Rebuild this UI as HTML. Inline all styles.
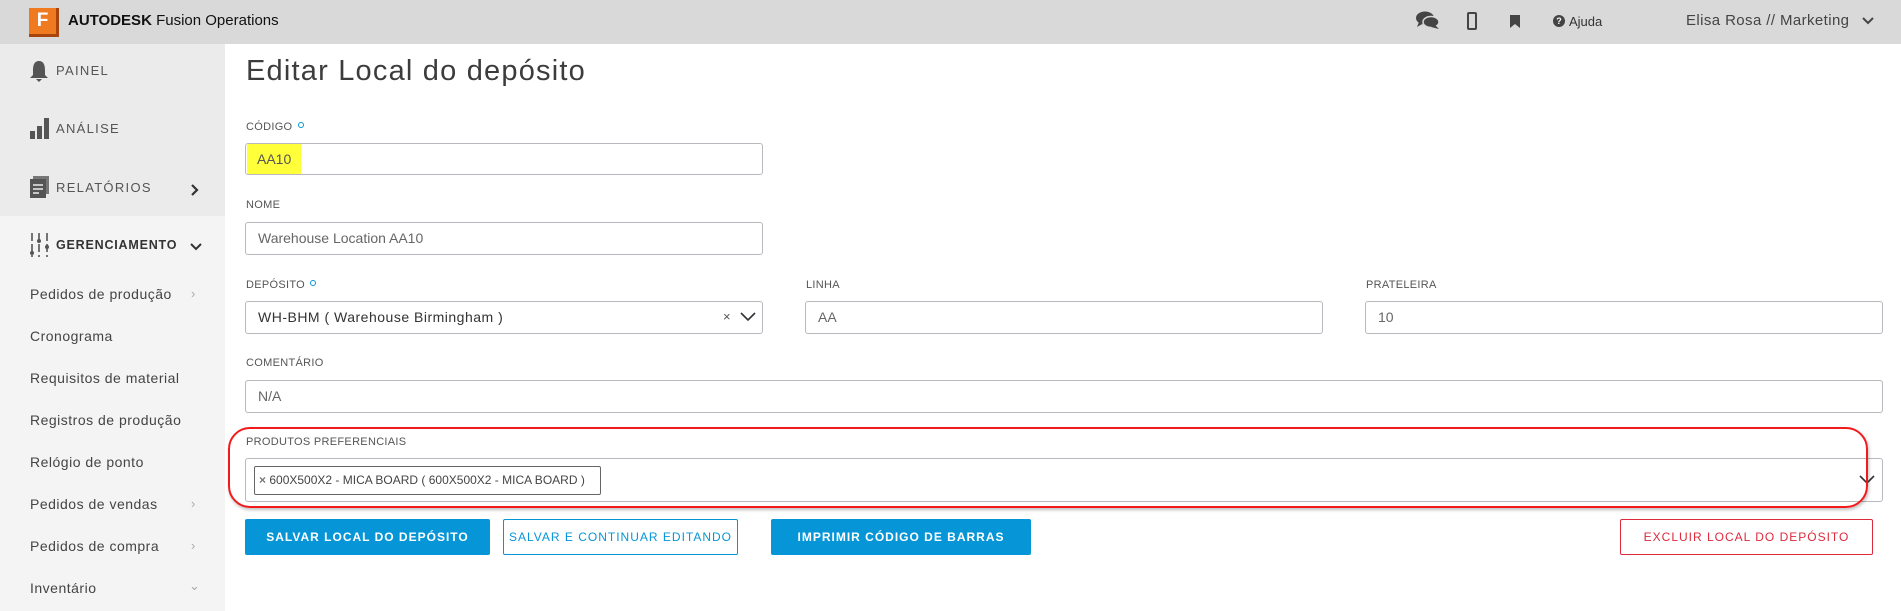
<!DOCTYPE html>
<html><head><meta charset="utf-8"><style>
*{box-sizing:border-box;margin:0;padding:0}
body{width:1901px;height:611px;overflow:hidden;background:#fff;font-family:"Liberation Sans",sans-serif;color:#3c3c3c;position:relative}
.abs{position:absolute}
.top{left:0;top:0;width:1901px;height:44px;background:#d9d9d9}
.side{left:0;top:44px;width:225px;height:567px;background:#f4f4f4}
.side1{left:0;top:44px;width:225px;height:172px;background:#ebebeb}
.nav{font-size:13px;letter-spacing:1.3px;color:#555}
.sub{left:30px;font-size:14px;letter-spacing:.5px;color:#444}
.lbl{font-size:11px;color:#555;letter-spacing:.3px}
.inp{border:1px solid #b8b8be;border-radius:3px;height:33px;font-size:14px;color:#666;padding-left:12px;line-height:31px}
.btn{height:36px;font-size:12px;font-weight:bold;letter-spacing:1px;text-align:center;line-height:36px;border-radius:2px}
</style></head><body>
<div class="abs top"></div>
<div class="abs" style="left:29px;top:8px;width:30px;height:29px;background:#a8440c"></div>
<div class="abs" style="left:29px;top:8px;width:27px;height:26px;background:#f07a1f;color:#fff;font-weight:bold;font-size:19px;text-align:center;line-height:26px">F</div>
<div class="abs" style="left:68px;top:12px;font-size:15px;color:#111"><b>AUTODESK</b> Fusion Operations</div>
<svg class="abs" style="left:1416px;top:11px" width="24" height="20" viewBox="0 0 24 20"><ellipse cx="9" cy="7" rx="9" ry="6.5" fill="#444"/><path d="M3 11 L1 16 L8 12Z" fill="#444"/><ellipse cx="15" cy="11" rx="8" ry="5.5" fill="#444" stroke="#d9d9d9" stroke-width="1.5"/><path d="M19 14 L23 18 L15 16Z" fill="#444"/></svg>
<div class="abs" style="left:1467px;top:12px;width:10px;height:18px;border:2px solid #444;border-radius:2px"></div>
<svg class="abs" style="left:1510px;top:15px" width="10" height="13"><path d="M0 0H10V13L5 9L0 13Z" fill="#444"/></svg>
<div class="abs" style="left:1553px;top:15px;width:12px;height:12px;border-radius:50%;background:#444;color:#fff;font-size:9px;font-weight:bold;text-align:center;line-height:12px">?</div>
<div class="abs" style="left:1569px;top:14px;font-size:13px;color:#333">Ajuda</div>
<div class="abs" style="left:1686px;top:12px;font-size:15px;color:#444;letter-spacing:.4px">Elisa Rosa // Marketing</div>
<svg class="abs" style="left:1861px;top:16px" width="14" height="10"><path d="M2 2L7 7L12 2" stroke="#444" stroke-width="2" fill="none"/></svg>

<div class="abs side"></div><div class="abs side1"></div>
<svg class="abs" style="left:29px;top:60px" width="20" height="22"><path d="M10 1C5 1 4 6 4 10V15L1 18H19L16 15V10C16 6 15 1 10 1Z M7 19H13L10 22Z" fill="#555"/></svg>
<div class="abs nav" style="left:56px;top:63px">PAINEL</div>
<svg class="abs" style="left:30px;top:118px" width="20" height="22"><rect x="0" y="13" width="5" height="8" fill="#555"/><rect x="7" y="8" width="5" height="13" fill="#555"/><rect x="14" y="0" width="5" height="21" fill="#555"/></svg>
<div class="abs nav" style="left:56px;top:121px">ANÁLISE</div>
<svg class="abs" style="left:30px;top:176px" width="20" height="22"><rect x="3" y="0" width="16" height="18" fill="#777"/><rect x="0" y="3" width="16" height="19" fill="#555"/><path d="M3 9H13M3 13H13M3 17H9" stroke="#ebebeb" stroke-width="1.5"/></svg>
<div class="abs nav" style="left:56px;top:180px">RELATÓRIOS</div>
<svg class="abs" style="left:190px;top:183px" width="10" height="14"><path d="M2 2L7 7L2 12" stroke="#333" stroke-width="2.2" fill="none"/></svg>
<svg class="abs" style="left:30px;top:233px" width="20" height="24"><path d="M2 0V24M9 0V24M17 0V24" stroke="#555" stroke-width="1.6" stroke-dasharray="8 3"/><circle cx="2" cy="20" r="2" fill="#555"/><circle cx="9" cy="8" r="2" fill="#555"/><circle cx="17" cy="14" r="2" fill="#555"/></svg>
<div class="abs nav" style="left:56px;top:238px;font-weight:bold;color:#333;letter-spacing:.8px;font-size:12.5px">GERENCIAMENTO</div>
<svg class="abs" style="left:190px;top:242px" width="12" height="10"><path d="M1 2L6 7L11 2" stroke="#333" stroke-width="2" fill="none"/></svg>
<div class="abs sub" style="top:286px">Pedidos de produção</div><div class="abs" style="left:191px;top:286px;color:#aaa;font-size:13px">›</div>
<div class="abs sub" style="top:328px">Cronograma</div>
<div class="abs sub" style="top:370px">Requisitos de material</div>
<div class="abs sub" style="top:412px">Registros de produção</div>
<div class="abs sub" style="top:454px">Relógio de ponto</div>
<div class="abs sub" style="top:496px">Pedidos de vendas</div><div class="abs" style="left:191px;top:496px;color:#aaa;font-size:13px">›</div>
<div class="abs sub" style="top:538px">Pedidos de compra</div><div class="abs" style="left:191px;top:538px;color:#aaa;font-size:13px">›</div>
<div class="abs sub" style="top:580px">Inventário</div><div class="abs" style="left:189px;top:578px;color:#aaa;font-size:13px">⌄</div>

<div class="abs" style="left:246px;top:55px;font-size:29px;color:#3c3c3c;letter-spacing:1.2px">Editar Local do depósito</div>

<div class="abs lbl" style="left:246px;top:121px">CÓDIGO <span style="display:inline-block;width:6px;height:6px;border:1.5px solid #0696d7;border-radius:50%;vertical-align:2px;margin-left:2px"></span></div>
<div class="abs inp" style="left:245px;top:143px;width:518px;height:32px;padding-left:0"><span style="display:inline-block;background:#ffff3a;color:#555;padding:0 10px;margin-left:1px;line-height:30px">AA10</span></div>
<div class="abs lbl" style="left:246px;top:199px">NOME</div>
<div class="abs inp" style="left:245px;top:222px;width:518px">Warehouse Location AA10</div>
<div class="abs lbl" style="left:246px;top:279px">DEPÓSITO <span style="display:inline-block;width:6px;height:6px;border:1.5px solid #0696d7;border-radius:50%;vertical-align:2px;margin-left:2px"></span></div>
<div class="abs inp" style="left:245px;top:301px;width:518px;color:#333;letter-spacing:.5px">WH-BHM ( Warehouse Birmingham )</div>
<div class="abs" style="left:723px;top:309px;font-size:13px;color:#555">×</div>
<svg class="abs" style="left:740px;top:311px" width="16" height="11"><path d="M1 2L8 9L15 2" stroke="#333" stroke-width="1.6" fill="none"/></svg>
<div class="abs lbl" style="left:806px;top:279px">LINHA</div>
<div class="abs inp" style="left:805px;top:301px;width:518px">AA</div>
<div class="abs lbl" style="left:1366px;top:279px">PRATELEIRA</div>
<div class="abs inp" style="left:1365px;top:301px;width:518px">10</div>
<div class="abs lbl" style="left:246px;top:357px">COMENTÁRIO</div>
<div class="abs inp" style="left:245px;top:380px;width:1638px">N/A</div>
<div class="abs lbl" style="left:246px;top:436px">PRODUTOS PREFERENCIAIS</div>
<div class="abs inp" style="left:245px;top:458px;width:1638px;height:44px"></div>
<div class="abs" style="left:254px;top:466px;width:347px;height:29px;border:1px solid #666;border-radius:2px;font-size:12px;color:#444;line-height:27px;padding-left:4px"><b style="color:#777">×</b>&nbsp;600X500X2 - MICA BOARD ( 600X500X2 - MICA BOARD )</div>
<svg class="abs" style="left:1859px;top:474px" width="16" height="11"><path d="M1 2L8 9L15 2" stroke="#333" stroke-width="1.6" fill="none"/></svg>
<div class="abs" style="left:228px;top:427px;width:1640px;height:81px;border:2.5px solid #f21a1a;border-radius:22px;box-shadow:1px 2px 3px rgba(0,0,0,.25)"></div>

<div class="abs btn" style="left:245px;top:519px;width:245px;background:#0696d7;color:#fff">SALVAR LOCAL DO DEPÓSITO</div>
<div class="abs btn" style="left:503px;top:519px;width:235px;border:1px solid #0696d7;color:#0696d7;font-weight:normal;line-height:34px">SALVAR E CONTINUAR EDITANDO</div>
<div class="abs btn" style="left:771px;top:519px;width:260px;background:#0696d7;color:#fff">IMPRIMIR CÓDIGO DE BARRAS</div>
<div class="abs btn" style="left:1620px;top:519px;width:253px;border:1px solid #dd2a3d;color:#dd2a3d;font-weight:normal;line-height:34px">EXCLUIR LOCAL DO DEPÓSITO</div>
</body></html>
